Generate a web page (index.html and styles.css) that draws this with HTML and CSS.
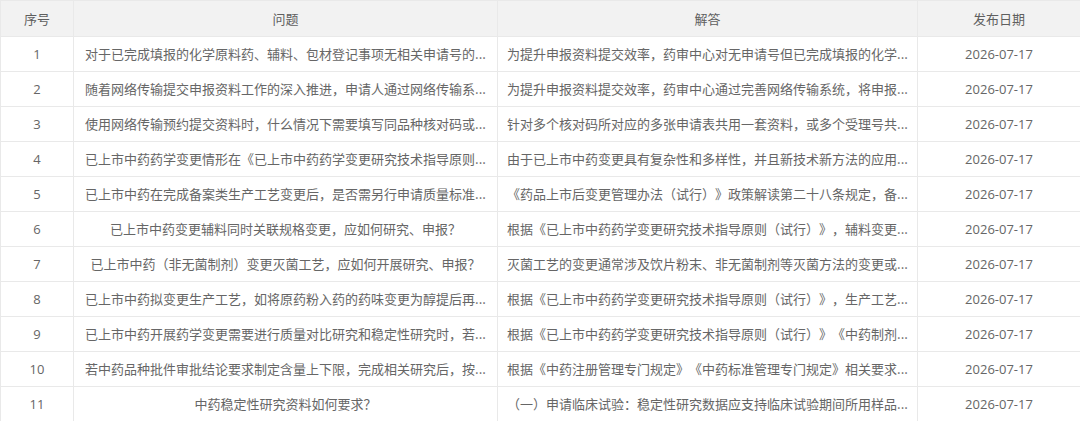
FILE: index.html
```html
<!DOCTYPE html>
<html lang="zh-CN">
<head>
<meta charset="utf-8">
<link rel="stylesheet" href="styles.css">
</head>
<body>
<table class="qa-table">
  <colgroup>
    <col class="c-no">
    <col class="c-q">
    <col class="c-a">
    <col class="c-date">
  </colgroup>
  <thead>
    <tr><th>序号</th><th>问题</th><th>解答</th><th>发布日期</th></tr>
  </thead>
  <tbody>
    <tr><td>1</td><td>对于已完成填报的化学原料药、辅料、包材登记事项无相关申请号的...</td><td>为提升申报资料提交效率，药审中心对无申请号但已完成填报的化学...</td><td>2026-07-17</td></tr>
    <tr><td>2</td><td>随着网络传输提交申报资料工作的深入推进，申请人通过网络传输系...</td><td>为提升申报资料提交效率，药审中心通过完善网络传输系统，将申报...</td><td>2026-07-17</td></tr>
    <tr><td>3</td><td>使用网络传输预约提交资料时，什么情况下需要填写同品种核对码或...</td><td>针对多个核对码所对应的多张申请表共用一套资料，或多个受理号共...</td><td>2026-07-17</td></tr>
    <tr><td>4</td><td>已上市中药药学变更情形在《已上市中药药学变更研究技术指导原则...</td><td>由于已上市中药变更具有复杂性和多样性，并且新技术新方法的应用...</td><td>2026-07-17</td></tr>
    <tr><td>5</td><td>已上市中药在完成备案类生产工艺变更后，是否需另行申请质量标准...</td><td>《药品上市后变更管理办法（试行）》政策解读第二十八条规定，备...</td><td>2026-07-17</td></tr>
    <tr><td>6</td><td>已上市中药变更辅料同时关联规格变更，应如何研究、申报？</td><td>根据《已上市中药药学变更研究技术指导原则（试行）》，辅料变更...</td><td>2026-07-17</td></tr>
    <tr><td>7</td><td>已上市中药（非无菌制剂）变更灭菌工艺，应如何开展研究、申报？</td><td>灭菌工艺的变更通常涉及饮片粉末、非无菌制剂等灭菌方法的变更或...</td><td>2026-07-17</td></tr>
    <tr><td>8</td><td>已上市中药拟变更生产工艺，如将原药粉入药的药味变更为醇提后再...</td><td>根据《已上市中药药学变更研究技术指导原则（试行）》，生产工艺...</td><td>2026-07-17</td></tr>
    <tr><td>9</td><td>已上市中药开展药学变更需要进行质量对比研究和稳定性研究时，若...</td><td>根据《已上市中药药学变更研究技术指导原则（试行）》《中药制剂...</td><td>2026-07-17</td></tr>
    <tr><td>10</td><td>若中药品种批件审批结论要求制定含量上下限，完成相关研究后，按...</td><td>根据《中药注册管理专门规定》《中药标准管理专门规定》相关要求...</td><td>2026-07-17</td></tr>
    <tr><td>11</td><td>中药稳定性研究资料如何要求？</td><td>（一）申请临床试验：稳定性研究数据应支持临床试验期间所用样品...</td><td>2026-07-17</td></tr>
  </tbody>
</table>
</body>
</html>
```

FILE: styles.css
```css
html, body {
  margin: 0;
  padding: 0;
  background: #ffffff;
}

body {
  font-family: "Noto Sans CJK SC", "Open Sans", sans-serif;
  font-size: 13px;
  color: #666666;
}

.qa-table {
  width: 1080px;
  table-layout: fixed;
  border-collapse: collapse;
}

.c-no { width: 73px; }
.c-q { width: 424px; }
.c-a { width: 420px; }
.c-date { width: 163px; }

.qa-table th,
.qa-table td {
  border: 1px solid #e9e9e9;
  padding: 0 4px;
  text-align: center;
  white-space: nowrap;
  overflow: hidden;
  font-weight: normal;
  line-height: 20px;
  text-spacing-trim: space-all;
}

.qa-table th {
  height: 35px;
  background: #f2f2f2;
  color: #5f5f5f;
}

.qa-table td {
  height: 34px;
}

.qa-table td:first-child,
.qa-table td:last-child {
  font-family: "Open Sans", "Noto Sans CJK SC", sans-serif;
}
```
